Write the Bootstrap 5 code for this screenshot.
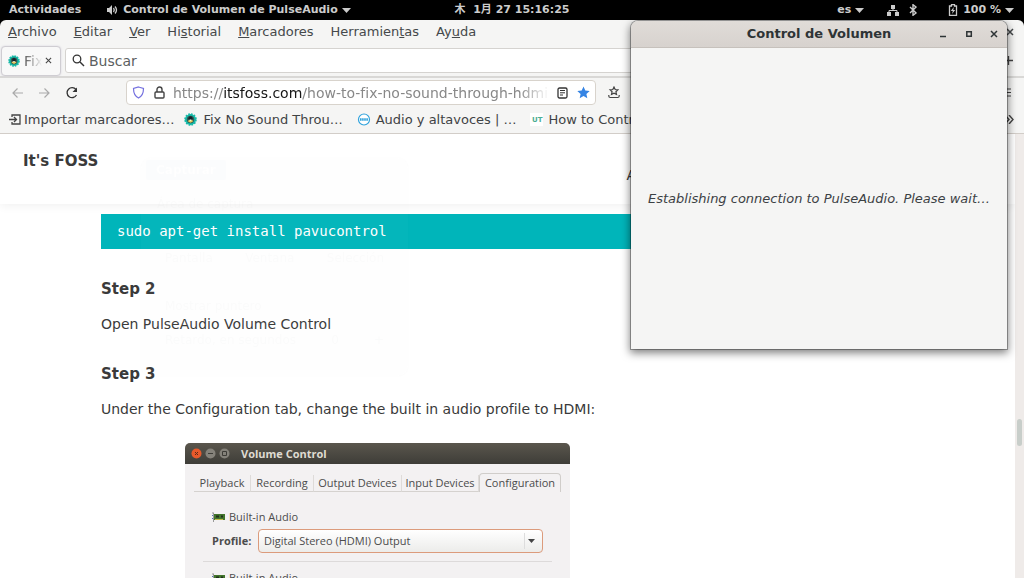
<!DOCTYPE html>
<html lang="es">
<head>
<meta charset="utf-8">
<meta name="viewport" content="width=device-width, initial-scale=1">
<title>Control de Volumen</title>
<link href="https://cdn.jsdelivr.net/npm/bootstrap@5.3.0/dist/css/bootstrap.min.css" rel="stylesheet">
<style>
body{font-family:"DejaVu Sans",sans-serif;font-size:14px;line-height:20px;color:#2e3436;background:#000}
button{font:inherit;color:inherit;background:none;border:0;padding:0}
a{color:inherit;text-decoration:none}
svg{display:block;flex:none}
.shellbar{display:grid;grid-template-columns:1fr auto 1fr;height:20px;background:#000;color:#ccc;font-size:11px;font-weight:700;line-height:20px}
.shellbar .clock{font-family:"DejaVu Sans","Noto Sans CJK JP",sans-serif;white-space:pre}
.app-menu{margin-left:26px}
.browser{background:#f5f5f4;border-radius:6px 6px 0 0;overflow:hidden;white-space:nowrap;min-height:0}
.menus{height:26px;padding:0 10px 2px 8px;gap:17px;color:#45494b;font-size:13px}
.tabs-row{height:32px;border-bottom:2px solid #d9d8d6;padding:0 11px 1px 1px}
.page-tab{width:60px;height:30px;border:1px solid #cfcdd2;border-radius:4px;background:#f8f8f8;box-shadow:0 0 2px #d5d2dc;padding:0 8px 0 6px}
.page-tab .title{width:18px;overflow:hidden;color:#555;-webkit-mask-image:linear-gradient(90deg,#000,transparent);mask-image:linear-gradient(90deg,#000,transparent)}
.search-box{height:25px;margin-left:4px;border:1px solid #d5d3d0;border-radius:3px;background:#fff;padding:0 6px;width:88%}
input.bare{border:0;outline:0;background:none;color:#4c4f51;padding:0;min-width:0}
.bare::placeholder{color:#5c5f61;opacity:1}
.toolbar-row{height:28px;padding:1px 13px 0 11px}
.url-box{width:47%;height:25px;border:1px solid #d8d3cc;border-radius:4px;background:#fff;padding:0 5px}
.url-text{color:#888;overflow:hidden;-webkit-mask-image:linear-gradient(90deg,#000 92%,transparent);mask-image:linear-gradient(90deg,#000 92%,transparent)}
.url-text b{font-weight:400;color:#151515}
.bookmarks{height:28px;padding:0 10px 0 8px;gap:10px;border-bottom:1px solid #d2cdc8;color:#3f4345;font-size:13px}
.viewport{background:#fff;color:#3a3a3a;min-height:0;overflow:hidden}
.site-head{height:70px;padding:17px 23px 0;box-shadow:0 2px 9px rgba(0,0,0,.06);background:#fff}
.site-head .brand{font-size:15px;font-weight:700}
.article{margin:10px 92px 0 101px}
.article pre{background:#00b5ba;color:#fff;font-family:"DejaVu Sans Mono",monospace;font-size:14px;line-height:19px;padding:8px 16px;margin:0 0 30px}
.article h3{font-size:15px;line-height:20px;font-weight:700;margin:0 0 15px}
.article p{font-size:14px;line-height:20px;margin:0 0 30px}
.shot{width:385px;margin:-6px 0 0 84px;font-family:"Open Sans",sans-serif;font-size:11px;line-height:16px;background:#f3f1f2;color:#4c4c4c;border-radius:5px 5px 0 0;overflow:hidden}
.shot-title{height:21px;background:linear-gradient(#5a564d,#3e3d38);color:#dfdbd2;font-weight:700;padding:0 6px;gap:3px}
.shot-tabs{padding:9px 9px 0}
.shot-tabs button{height:17px;margin-top:2px;border-right:1px solid #dedbd9;border-bottom:1px solid #d5d2cf;white-space:nowrap}
.shot-tabs button.on{height:19px;margin:0;border:1px solid #d0cdca;border-bottom:0;border-radius:4px 4px 0 0}
.device{margin:0 18px;padding:17px 9px 8px;border-bottom:1px solid #dddada}
.device select{appearance:none;font:inherit;color:#4c4c4c;height:24px;width:285px;border:1px solid #dc9b7c;border-radius:4px;background:linear-gradient(#fff,#ececea);padding:0 5px}
.pick{position:relative}
.pick svg{position:absolute;right:1px;top:2px;pointer-events:none}
.scroller{width:9px;background:#efebe9;padding:285px 2px 0}
.scroller div{height:27px;background:#c8ceca;border-radius:3px}
.volume-win{position:absolute;top:21px;right:17px;width:376px;height:328px;background:#f5f5f4;border-radius:7px 7px 0 0;box-shadow:0 0 0 1px rgba(0,0,0,.3),0 3px 9px 1px rgba(0,0,0,.5);white-space:nowrap}
.volume-head{height:27px;background:linear-gradient(#e0dcd8,#d7d2ce);border-bottom:1px solid #c6c1bc;border-radius:7px 7px 0 0;font-weight:700;font-size:13px;padding:0 9px 0 0}
.volume-msg{font-size:13px;color:#3c4144}
.ghost{position:absolute;left:141px;top:158px;width:267px;height:218px;border-radius:10px;box-shadow:0 0 3px #000;opacity:.016;pointer-events:none;font-size:12px;line-height:16px;background:#eee}
.ghost-head{height:30px;background:#ccc;border-radius:10px 10px 0 0;padding:4px 5px}
.ghost-head span{background:#36a;color:#fff;font-weight:700;padding:3px 10px;border-radius:3px}
</style>
</head>
<body class="vh-100 d-flex flex-column overflow-hidden">
<svg width="0" height="0" class="position-absolute">
<symbol id="foss" viewBox="0 0 12 12"><circle cx="6" cy="6" r="5" fill="#16b9a8" stroke="#16b9a8" stroke-width="1.6" stroke-dasharray="1.6 1"/><circle cx="6" cy="6" r="3.4" fill="#315c55"/><path d="M3.5 7.5 6 5l2.500 2.500L6 9z" fill="#e8c95b"/><circle cx="6" cy="4.900" r="1.900" fill="#15232b"/><path d="M5 6h2L6 7.500z" fill="#fff"/></symbol>
<symbol id="down" viewBox="0 0 9 5"><path d="M0 0h9L4.500 5z" fill="currentColor"/></symbol>
<symbol id="cross" viewBox="0 0 8 8"><path d="m1 1 6 6m0-6L1 7" stroke="currentColor" stroke-width="1.500"/></symbol>
<symbol id="card-chip" viewBox="0 0 13 10"><path d="M1.500 1v9M0 1h2" stroke="#999" fill="none"/><path d="M2 2h11v6H2z" fill="#42752c"/><path d="M4 3.500h3v2H4zm5 0h2v2H9z" fill="#20301c"/><path d="M3 7.500h8" stroke="#c2ba4c"/><path d="M0 3h1v1H0zm0 3h1v1H0z" fill="#5174b5"/></symbol>
</svg>

<header class="shellbar flex-shrink-0">
  <div class="d-flex align-items-center">
    <button type="button" style="margin-left:9px">Actividades</button>
    <button type="button" class="app-menu d-flex align-items-center gap-1">
      <svg width="12" height="10" viewBox="0 0 12 10"><path d="M0 3h2l3-3v10L2 7H0z" fill="#ccc"/><path d="M6.500 3q1.500 2 0 4M8 1.500q3 3.500 0 7" fill="none" stroke="#ccc" stroke-width="1.300"/></svg>
      <span>Control de Volumen de PulseAudio</span>
      <svg width="9" height="5"><use href="#down"/></svg>
    </button>
  </div>
  <button type="button" class="clock">木  1月 27 15:16:25</button>
  <div class="d-flex align-items-center justify-content-end" style="padding-right:10px">
    <button type="button" class="d-flex align-items-center gap-1">es <svg width="9" height="5"><use href="#down"/></svg></button>
    <svg width="12" height="11" viewBox="0 0 12 11" style="margin-left:23px"><path d="M4 0h4v4H4zM0 7h4v4H0zm8 0h4v4H8z" fill="#ccc"/><path d="M6 4v2M2 7V5.500h8V7" fill="none" stroke="#ccc"/></svg>
    <svg width="9" height="12" viewBox="0 0 9 12" style="margin:0 30px 0 10px"><path d="m1 3 6 6-3 2.300V.7L7 3 1 9" fill="none" stroke="#ccc" stroke-width="1.400"/></svg>
    <svg width="10" height="12" viewBox="0 0 9 12"><path d="M1 2h2V.7h3V2h2v9.300H1z" fill="none" stroke="#ccc" stroke-width="1.300"/><path d="M5.300 3 2.300 7h2L3.500 10l3.200-4H4.800z" fill="#ccc"/></svg>
    <button type="button" class="d-flex align-items-center gap-1" style="margin-left:5px">100 % <svg width="9" height="5"><use href="#down"/></svg></button>
  </div>
</header>

<main class="browser flex-grow-1 d-flex flex-column">
  <nav class="menus d-flex align-items-center flex-shrink-0">
    <button type="button"><u>A</u>rchivo</button><button type="button"><u>E</u>ditar</button><button type="button"><u>V</u>er</button><button type="button">Hi<u>s</u>torial</button><button type="button"><u>M</u>arcadores</button><button type="button">Herramien<u>t</u>as</button><button type="button">Ay<u>u</u>da</button>
    <button type="button" class="ms-auto" aria-label="Cerrar"><svg width="8" height="8"><use href="#cross"/></svg></button>
  </nav>
  <div class="tabs-row d-flex align-items-center flex-shrink-0">
    <div class="page-tab d-flex align-items-center flex-shrink-0">
      <svg width="12" height="12"><use href="#foss"/></svg><span class="title ms-1">Fix</span>
      <button type="button" class="ms-auto" aria-label="Cerrar pestaña"><svg width="7" height="7" viewBox="0 0 8 8"><path d="m1 1 6 6m0-6L1 7" stroke="#444" stroke-width="1.200"/></svg></button>
    </div>
    <label class="search-box d-flex align-items-center gap-1">
      <svg width="13" height="13" viewBox="0 0 13 13"><circle cx="5" cy="5" r="3.800" fill="none" stroke="#333" stroke-width="1.300"/><path d="m8 8 4 4" stroke="#333" stroke-width="1.500"/></svg>
      <input class="bare flex-grow-1" type="text" placeholder="Buscar" aria-label="Buscar">
    </label>
    <button type="button" class="ms-auto" aria-label="Nueva pestaña"><svg width="9" height="9" viewBox="0 0 9 9"><path d="M4.500 0v9M0 4.500h9" stroke="#444" stroke-width="1.300"/></svg></button>
  </div>
  <div class="toolbar-row d-flex align-items-center flex-shrink-0">
    <button type="button" aria-label="Atrás"><svg width="13" height="12" viewBox="0 0 13 12"><path d="M12 6H2m4.500-4.500L2 6l4.500 4.500" fill="none" stroke="#aaa" stroke-width="1.200"/></svg></button>
    <button type="button" aria-label="Adelante" style="margin-left:14px"><svg width="13" height="12" viewBox="0 0 13 12"><path d="M1 6h10M6.500 1.500 11 6l-4.500 4.500" fill="none" stroke="#aaa" stroke-width="1.200"/></svg></button>
    <button type="button" aria-label="Recargar" style="margin-left:14px"><svg width="14" height="14" viewBox="0 0 14 14"><path d="M11.500 9A5 5 0 1 1 11 3.500" fill="none" stroke="#333" stroke-width="1.300"/><path d="M12 1.500v4.500H7.500z" fill="#333"/></svg></button>
    <div class="url-box d-flex align-items-center" style="margin-left:47px">
      <svg width="13" height="13" viewBox="0 0 13 13"><path d="M6.500 1 11.500 2.500Q11.500 9.500 6.500 12 1.500 9.500 1.500 2.500z" fill="none" stroke="#7571df" stroke-width="1.200"/></svg>
      <svg width="11" height="13" viewBox="0 0 11 13" style="margin:0 8px 0 9px"><rect x="1" y="6" width="9" height="6" rx="1" fill="none" stroke="#444" stroke-width="1.400"/><path d="M3 6V3.500a2.500 2.500 0 0 1 5 0V6" fill="none" stroke="#444" stroke-width="1.400"/></svg>
      <span class="url-text flex-grow-1">https://<b>itsfoss.com</b>/how-to-fix-no-sound-through-hdmi-in-ubuntu/</span>
      <svg width="11" height="12" viewBox="0 0 11 12" style="margin:0 9px 0 8px"><rect x="1" y="1" width="9" height="10" rx="1.500" fill="none" stroke="#333" stroke-width="1.300"/><path d="M3 3.500h5M3 5.800h5M3 8h3" stroke="#333"/></svg>
      <svg width="13" height="13" viewBox="0 0 13 13"><path d="m6.500 .5 1.800 4 4.400.5-3.300 2.900.9 4.400-3.800-2.200-3.800 2.200.9-4.400L.3 5l4.400-.5z" fill="#3584e4"/></svg>
    </div>
    <svg width="12" height="13" viewBox="0 0 12 13" style="margin-left:12px"><path d="m6 1 1.200 2.500 2.700.3-2 1.900.6 2.700L6 7.100 3.500 8.400l.6-2.700-2-1.900 2.700-.3zM.8 9v1q0 1.500 1.500 1.500h7.400q1.500 0 1.500-1.500V9" fill="none" stroke="#444" stroke-width="1.200"/></svg>
    <svg class="ms-auto" width="11" height="9" viewBox="0 0 11 9"><path d="M0 1h11M0 4.500h11M0 8h11" stroke="#444"/></svg>
  </div>
  <nav class="bookmarks d-flex align-items-center flex-shrink-0">
    <a href="#" class="d-flex align-items-center"><svg width="13" height="11" viewBox="0 0 13 11" style="margin-right:3px"><path d="M4 3V1h8v9H4V8M1 5.500h7M6 3l2.500 2.500L6 8" fill="none" stroke="#444" stroke-width="1.300"/></svg>Importar marcadores…</a>
    <a href="#" class="d-flex align-items-center"><svg width="13" height="13" style="margin-right:6px"><use href="#foss"/></svg>Fix No Sound Throu…</a>
    <a href="#" class="d-flex align-items-center ms-1"><svg width="14" height="13" viewBox="0 0 14 13" style="margin-right:5px"><circle cx="7" cy="6.500" r="5.500" fill="#fff" stroke="#31a3dc" stroke-width="1.200"/><path d="M3 6.500h8" stroke="#31a3dc" stroke-width="2.400" stroke-dasharray="1.600 .5"/></svg>Audio y altavoces | …</a>
    <a href="#" class="d-flex align-items-center ms-1"><svg width="13" height="13" viewBox="0 0 13 13" style="margin-right:5px"><rect width="13" height="13" fill="#fff"/><text x="2" y="9" font-size="7" font-weight="700" fill="#4cae94">UT</text></svg>How to Control</a>
    <svg class="ms-auto" width="9" height="9" viewBox="0 0 9 9"><path d="m0 0 4 4.500L0 9m4-9 4 4.500L4 9" fill="none" stroke="#444" stroke-width="1.400"/></svg>
  </nav>
  <div class="viewport flex-grow-1 d-flex">
    <div class="flex-grow-1">
      <div class="site-head d-flex justify-content-between"><a href="#" class="brand">It's FOSS</a><a href="#" style="margin:14px 324px 0 0">About</a></div>
      <article class="article">
        <pre>sudo apt-get install pavucontrol</pre>
        <h3>Step 2</h3>
        <p>Open PulseAudio Volume Control</p>
        <h3>Step 3</h3>
        <p>Under the Configuration tab, change the built in audio profile to HDMI:</p>
        <section class="shot">
          <div class="shot-title d-flex align-items-center">
            <svg width="11" height="11" viewBox="0 0 11 11"><circle cx="5.500" cy="5.500" r="5" fill="#e8592b"/><path d="m4 4 3 3m0-3L4 7" stroke="#5b2a18"/></svg>
            <svg width="11" height="11" viewBox="0 0 11 11"><circle cx="5.500" cy="5.500" r="5" fill="#85827a"/><path d="M3 5.500h5" stroke="#3e3d38"/></svg>
            <svg width="11" height="11" viewBox="0 0 11 11"><circle cx="5.500" cy="5.500" r="5" fill="#85827a"/><path d="M3.500 3.500h4v4h-4z" fill="none" stroke="#3e3d38"/></svg>
            <span class="ms-2">Volume Control</span>
          </div>
          <div class="shot-tabs d-flex">
            <button type="button" style="width:57px">Playback</button><button type="button" style="width:63px">Recording</button><button type="button" style="width:88px">Output Devices</button><button type="button" style="width:77px">Input Devices</button><button type="button" class="on" style="width:82px">Configuration</button>
          </div>
          <div class="device">
            <div class="d-flex align-items-center"><svg width="13" height="10" class="me-1"><use href="#card-chip"/></svg>Built-in Audio</div>
            <div class="d-flex align-items-center justify-content-between mt-1"><label for="profile" class="fw-bold">Profile:</label><span class="pick"><select id="profile"><option>Digital Stereo (HDMI) Output</option></select><svg width="18" height="20" viewBox="0 0 18 20"><path d="M.5 2v16" stroke="#ddd"/><path d="M4 8h7l-3.500 4z" fill="#444"/></svg></span></div>
          </div>
          <div class="device" style="padding-top:8px"><div class="d-flex align-items-center"><svg width="13" height="10" class="me-1"><use href="#card-chip"/></svg>Built-in Audio</div></div>
        </section>
      </article>
    </div>
    <div class="scroller flex-shrink-0"><div></div></div>
  </div>
</main>

<div class="ghost" aria-hidden="true">
  <div class="ghost-head"><span>Capturar</span></div>
  <div class="px-3 pt-2">Área de captura</div>
  <div class="d-flex justify-content-between px-4" style="padding-top:38px"><span>Pantalla</span><span>Ventana</span><span>Selección</span></div>
  <div class="px-4" style="padding-top:32px">Mostrar puntero</div>
  <div class="px-4 d-flex justify-content-between" style="padding-top:18px"><span>Retardo, en segundos</span><span>0</span><span>+</span></div>
</div>

<section class="volume-win d-flex flex-column">
  <div class="volume-head d-flex align-items-center flex-shrink-0">
    <span class="flex-grow-1 text-center" style="padding-left:69px">Control de Volumen</span>
    <div class="d-flex align-items-center" style="gap:17px">
      <button type="button" aria-label="Minimizar"><svg width="10" height="8" viewBox="0 0 10 8"><path d="M2 6.500h6" stroke="#2e3436" stroke-width="1.500"/></svg></button>
      <button type="button" aria-label="Maximizar"><svg width="8" height="8" viewBox="0 0 8 8"><path d="M1.800 1.800h4.500v4.500H1.800z" fill="none" stroke="#2e3436" stroke-width="1.500"/></svg></button>
      <button type="button" aria-label="Cerrar"><svg width="8" height="8"><use href="#cross"/></svg></button>
    </div>
  </div>
  <div class="volume-msg flex-grow-1 d-flex align-items-center justify-content-center"><em>Establishing connection to PulseAudio. Please wait…</em></div>
</section>
<script src="https://cdn.jsdelivr.net/npm/bootstrap@5.3.0/dist/js/bootstrap.bundle.min.js"></script>
</body>
</html>
